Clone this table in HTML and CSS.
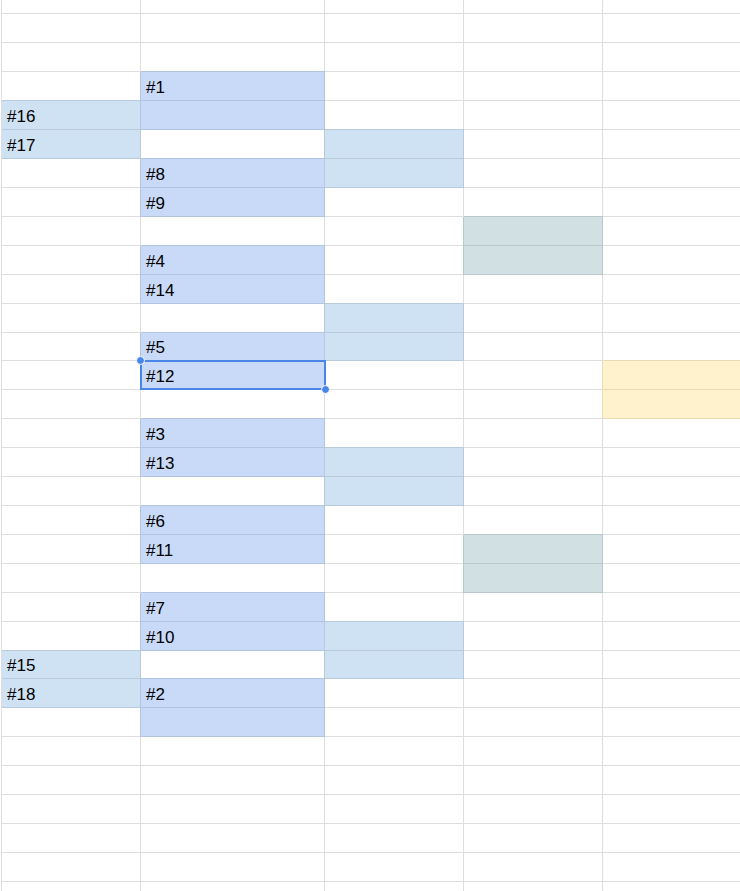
FILE: index.html
```html
<!DOCTYPE html>
<html>
<head>
<meta charset="utf-8">
<link rel="stylesheet" href="styles.css">
</head>
<body>
<div class="sheet">
  <div class="row top"><div class="c"></div><div class="c b"></div><div class="c"></div><div class="c"></div><div class="c"></div></div>
  <div class="row"><div class="c"></div><div class="c b"></div><div class="c"></div><div class="c"></div><div class="c"></div></div>
  <div class="row"><div class="c"></div><div class="c b"></div><div class="c"></div><div class="c"></div><div class="c"></div></div>
  <div class="row"><div class="c"></div><div class="c b blue">#1</div><div class="c"></div><div class="c"></div><div class="c"></div></div>
  <div class="row"><div class="c lblue">#16</div><div class="c b blue"></div><div class="c"></div><div class="c"></div><div class="c"></div></div>
  <div class="row"><div class="c lblue">#17</div><div class="c b"></div><div class="c lblue"></div><div class="c"></div><div class="c"></div></div>
  <div class="row"><div class="c"></div><div class="c b blue">#8</div><div class="c lblue"></div><div class="c"></div><div class="c"></div></div>
  <div class="row"><div class="c"></div><div class="c b blue">#9</div><div class="c"></div><div class="c"></div><div class="c"></div></div>
  <div class="row"><div class="c"></div><div class="c b"></div><div class="c"></div><div class="c teal"></div><div class="c"></div></div>
  <div class="row"><div class="c"></div><div class="c b blue">#4</div><div class="c"></div><div class="c teal"></div><div class="c"></div></div>
  <div class="row"><div class="c"></div><div class="c b blue">#14</div><div class="c"></div><div class="c"></div><div class="c"></div></div>
  <div class="row"><div class="c"></div><div class="c b"></div><div class="c lblue"></div><div class="c"></div><div class="c"></div></div>
  <div class="row short"><div class="c"></div><div class="c b blue">#5</div><div class="c lblue"></div><div class="c"></div><div class="c"></div></div>
  <div class="row"><div class="c"></div><div class="c b blue sel">#12<span class="frame"><span class="dot tl"></span><span class="dot br"></span></span></div><div class="c"></div><div class="c"></div><div class="c yellow"></div></div>
  <div class="row"><div class="c"></div><div class="c b"></div><div class="c"></div><div class="c"></div><div class="c yellow"></div></div>
  <div class="row"><div class="c"></div><div class="c b blue">#3</div><div class="c"></div><div class="c"></div><div class="c"></div></div>
  <div class="row"><div class="c"></div><div class="c b blue">#13</div><div class="c lblue"></div><div class="c"></div><div class="c"></div></div>
  <div class="row"><div class="c"></div><div class="c b"></div><div class="c lblue"></div><div class="c"></div><div class="c"></div></div>
  <div class="row"><div class="c"></div><div class="c b blue">#6</div><div class="c"></div><div class="c"></div><div class="c"></div></div>
  <div class="row"><div class="c"></div><div class="c b blue">#11</div><div class="c"></div><div class="c teal"></div><div class="c"></div></div>
  <div class="row"><div class="c"></div><div class="c b"></div><div class="c"></div><div class="c teal"></div><div class="c"></div></div>
  <div class="row"><div class="c"></div><div class="c b blue">#7</div><div class="c"></div><div class="c"></div><div class="c"></div></div>
  <div class="row"><div class="c"></div><div class="c b blue">#10</div><div class="c lblue"></div><div class="c"></div><div class="c"></div></div>
  <div class="row short"><div class="c lblue">#15</div><div class="c b"></div><div class="c lblue"></div><div class="c"></div><div class="c"></div></div>
  <div class="row"><div class="c lblue">#18</div><div class="c b blue">#2</div><div class="c"></div><div class="c"></div><div class="c"></div></div>
  <div class="row"><div class="c"></div><div class="c b blue"></div><div class="c"></div><div class="c"></div><div class="c"></div></div>
  <div class="row"><div class="c"></div><div class="c b"></div><div class="c"></div><div class="c"></div><div class="c"></div></div>
  <div class="row"><div class="c"></div><div class="c b"></div><div class="c"></div><div class="c"></div><div class="c"></div></div>
  <div class="row"><div class="c"></div><div class="c b"></div><div class="c"></div><div class="c"></div><div class="c"></div></div>
  <div class="row"><div class="c"></div><div class="c b"></div><div class="c"></div><div class="c"></div><div class="c"></div></div>
  <div class="row"><div class="c"></div><div class="c b"></div><div class="c"></div><div class="c"></div><div class="c"></div></div>
  <div class="row"><div class="c"></div><div class="c b"></div><div class="c"></div><div class="c"></div><div class="c"></div></div>
</div>
</body>
</html>
```

FILE: styles.css
```css
html, body {
  margin: 0;
  padding: 0;
  background: #fff;
  overflow: hidden;
}
.sheet {
  margin-left: 1px;
  border-left: 1px solid #dedede;
  font-family: "Liberation Sans", Arial, sans-serif;
  font-size: 17px;
  color: #000;
  overflow: hidden;
  height: 891px;
}
.row {
  display: grid;
  grid-template-columns: 139px 184px 139px 139px 200px;
  height: 29px;
}
.row.top { height: 14px; }
.row.short { height: 28px; }
.c {
  position: relative;
  border-right: 1px solid #dedede;
  border-bottom: 1px solid #dedede;
  display: flex;
  align-items: flex-end;
  padding: 0 5px 4px 5px;
  line-height: 17px;
  white-space: nowrap;
  min-width: 0;
}
.row.top .c { padding: 0; }
.blue {
  background: #c9daf8;
  border-right-color: #b3c4e0;
  border-bottom-color: #b3c4e0;
  box-shadow: 0 -1px 0 #b3c4e0, -1px 0 0 #b3c4e0;
}
.lblue {
  background: #cfe2f3;
  border-right-color: #b9cbdb;
  border-bottom-color: #b9cbdb;
  box-shadow: 0 -1px 0 #b9cbdb, -1px 0 0 #b9cbdb;
}
.teal {
  background: #d0e0e3;
  border-right-color: #b9c8cb;
  border-bottom-color: #b9c8cb;
  box-shadow: 0 -1px 0 #b9c8cb, -1px 0 0 #b9c8cb;
}
.yellow {
  background: #fff2cc;
  border-right-color: #e8dbb6;
  border-bottom-color: #e8dbb6;
  box-shadow: 0 -1px 0 #e8dbb6, -1px 0 0 #e8dbb6;
}
.sel { z-index: 2; }
.frame {
  position: absolute;
  top: -1px;
  left: -1px;
  right: -2px;
  bottom: -1px;
  border: 2px solid #4a86e8;
}
.dot {
  position: absolute;
  width: 7px;
  height: 7px;
  border-radius: 50%;
  background: #4a86e8;
  border: 1px solid #fff;
}
.dot.tl { top: -6px; left: -6px; }
.dot.br { bottom: -6px; right: -6px; }
```
